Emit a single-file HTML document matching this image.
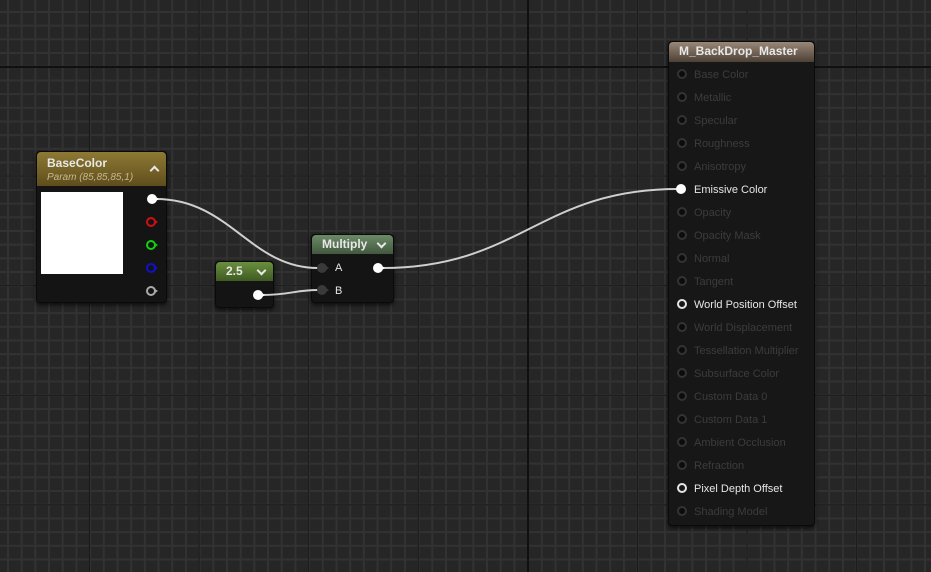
<!DOCTYPE html>
<html><head><style>
body{margin:0;width:931px;height:572px;overflow:hidden;font-family:"Liberation Sans",sans-serif;position:relative;
background-color:#262626;
background-image:
linear-gradient(to right,#101010 2px,transparent 2px),
linear-gradient(to bottom,#101010 2px,transparent 2px),
linear-gradient(to right,#191919 1px,transparent 1px),
linear-gradient(to bottom,#191919 1px,transparent 1px),
linear-gradient(to right,#323232 2px,transparent 2px),
linear-gradient(to bottom,#323232 2px,transparent 2px);
background-repeat:no-repeat,no-repeat,repeat,repeat,repeat,repeat;
background-size:100% 100%,100% 100%,109.6px 100%,100% 109.6px,13.7px 100%,100% 13.7px;
background-position:527px 0,0 66px,89px 0,0 66px,7px 0,0 11px;}
.node{position:absolute;background:#141414;border-radius:4px;box-shadow:0 2px 4px rgba(0,0,0,.7);border:1px solid #0a0a0a;}
.hdr{border-radius:4px 4px 0 0;color:#e8e8e8;font-weight:bold;font-size:12px;padding-left:10px;position:relative}
.lbl{position:absolute;font-size:11px;color:#3c3c3c}
.on{color:#e6e6e6}
.chev{position:absolute;width:5px;height:5px;border:solid #e8e8e8;border-width:2px 2px 0 0}
svg{position:absolute;left:0;top:0}
</style></head><body>
<div class="node" style="left:36px;top:151px;width:129px;height:150px">
 <div class="hdr" style="height:34px;background:linear-gradient(#8e7a34,#5e4d1c)"><div style="padding-top:4px">BaseColor</div><div style="font-weight:normal;font-style:italic;font-size:10px;color:#c8b890;margin-top:2px">Param (85,85,85,1)</div><span class="chev" style="right:8px;top:15px;transform:rotate(-45deg)"></span></div>
 <div style="position:absolute;left:4px;top:40px;width:82px;height:82px;background:#fff"></div>
</div>
<div class="node" style="left:215px;top:261px;width:57px;height:45px">
 <div class="hdr" style="height:19px;line-height:19px;background:linear-gradient(#6a8f3e,#3e5a22)">2.5<span class="chev" style="right:8px;top:5px;transform:rotate(135deg)"></span></div>
</div>
<div class="node" style="left:311px;top:234px;width:81px;height:67px">
 <div class="hdr" style="height:19px;line-height:19px;background:linear-gradient(#6b8a66,#42583f)">Multiply<span class="chev" style="right:8px;top:5px;transform:rotate(135deg)"></span></div>
 <div class="lbl on" style="left:23px;top:27px;font-size:11px">A</div>
 <div class="lbl on" style="left:23px;top:50px;font-size:11px">B</div>
</div>
<div class="node" style="left:668px;top:41px;width:145px;height:483px;background:#171717">
 <div class="hdr" style="height:20px;line-height:19px;background:linear-gradient(#9a8878,#4c4036)">M_BackDrop_Master</div>
 <div class="lbl" style="left:25px;top:27px">Base Color</div>
 <div class="lbl" style="left:25px;top:50px">Metallic</div>
 <div class="lbl" style="left:25px;top:73px">Specular</div>
 <div class="lbl" style="left:25px;top:96px">Roughness</div>
 <div class="lbl" style="left:25px;top:119px">Anisotropy</div>
 <div class="lbl on" style="left:25px;top:142px">Emissive Color</div>
 <div class="lbl" style="left:25px;top:165px">Opacity</div>
 <div class="lbl" style="left:25px;top:188px">Opacity Mask</div>
 <div class="lbl" style="left:25px;top:211px">Normal</div>
 <div class="lbl" style="left:25px;top:234px">Tangent</div>
 <div class="lbl on" style="left:25px;top:257px">World Position Offset</div>
 <div class="lbl" style="left:25px;top:280px">World Displacement</div>
 <div class="lbl" style="left:25px;top:303px">Tessellation Multiplier</div>
 <div class="lbl" style="left:25px;top:326px">Subsurface Color</div>
 <div class="lbl" style="left:25px;top:349px">Custom Data 0</div>
 <div class="lbl" style="left:25px;top:372px">Custom Data 1</div>
 <div class="lbl" style="left:25px;top:395px">Ambient Occlusion</div>
 <div class="lbl" style="left:25px;top:418px">Refraction</div>
 <div class="lbl on" style="left:25px;top:441px">Pixel Depth Offset</div>
 <div class="lbl" style="left:25px;top:464px">Shading Model</div>
</div>
<svg width="931" height="572">
 <g fill="none" stroke="#cfcfcf" stroke-width="2">
  <path d="M156 199 C230 199,250 268,318 268"/>
  <path d="M262 295 C290 295,295 290,318 290"/>
  <path d="M382 268 C520 268,540 189,678 189"/>
 </g>
 <g>
  <circle cx="152" cy="199" r="5" fill="#fff"/><path d="M156 197l3 2-3 2z" fill="#fff"/>
  <circle cx="151" cy="222" r="4" fill="none" stroke="#d01010" stroke-width="2"/><path d="M155 220l3 2-3 2z" fill="#d01010"/>
  <circle cx="151" cy="245" r="4" fill="none" stroke="#10d010" stroke-width="2"/><path d="M155 243l3 2-3 2z" fill="#10d010"/>
  <circle cx="151" cy="268" r="4" fill="none" stroke="#1010d0" stroke-width="2"/><path d="M155 266l3 2-3 2z" fill="#1010d0"/>
  <circle cx="151" cy="291" r="4" fill="none" stroke="#aaa" stroke-width="2"/><path d="M155 289l3 2-3 2z" fill="#aaa"/>
  <circle cx="258" cy="295" r="5" fill="#fff"/><path d="M262 293l3 2-3 2z" fill="#fff"/>
  <circle cx="322" cy="268" r="5" fill="#3a3a3a"/><path d="M326 266l3 2-3 2z" fill="#3a3a3a"/>
  <circle cx="322" cy="290" r="5" fill="#3a3a3a"/><path d="M326 288l3 2-3 2z" fill="#3a3a3a"/>
  <circle cx="378" cy="268" r="5" fill="#fff"/><path d="M382 266l3 2-3 2z" fill="#fff"/>
 </g>
 <g fill="#0c0c0c" stroke="#333" stroke-width="2">
  <circle cx="682" cy="74" r="4"/><circle cx="682" cy="97" r="4"/><circle cx="682" cy="120" r="4"/><circle cx="682" cy="143" r="4"/><circle cx="682" cy="166" r="4"/>
  <circle cx="682" cy="212" r="4"/><circle cx="682" cy="235" r="4"/><circle cx="682" cy="258" r="4"/><circle cx="682" cy="281" r="4"/>
  <circle cx="682" cy="327" r="4"/><circle cx="682" cy="350" r="4"/><circle cx="682" cy="373" r="4"/><circle cx="682" cy="396" r="4"/><circle cx="682" cy="419" r="4"/><circle cx="682" cy="442" r="4"/><circle cx="682" cy="465" r="4"/><circle cx="682" cy="511" r="4"/>
 </g>
 <circle cx="681" cy="189" r="5" fill="#fff"/>
 <circle cx="682" cy="304" r="4" fill="none" stroke="#e6e6e6" stroke-width="2"/>
 <circle cx="682" cy="488" r="4" fill="none" stroke="#e6e6e6" stroke-width="2"/>
</svg>
</body></html>
